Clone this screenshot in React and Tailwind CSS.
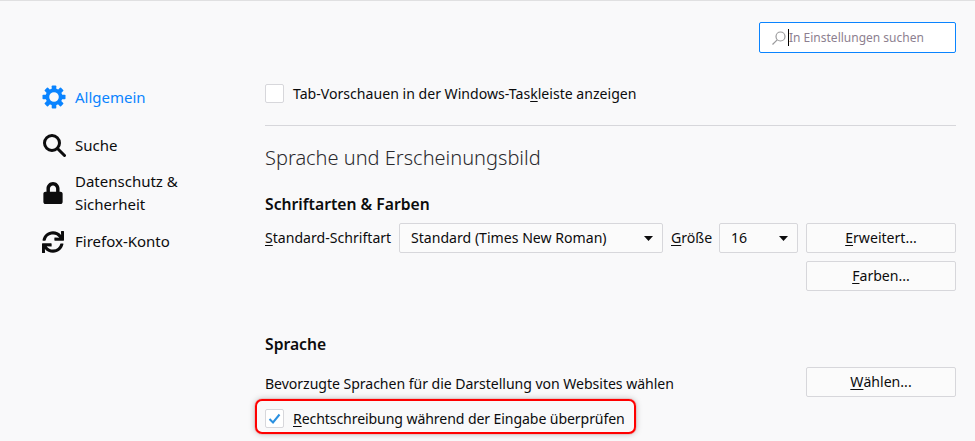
import React from 'react';
import { FaLock, FaSync } from 'react-icons/fa';

const U = ({ children }) => <span className="underline underline-offset-2 decoration-1">{children}</span>;

const NavItem = ({ icon, active, children, className = '' }) => (
  <div className={`flex items-center ${className}`}>
    <div className="w-[33px] flex justify-start shrink-0">{icon}</div>
    <div className={`text-[15px] leading-[23px] ${active ? 'text-[#0a84ff]' : 'text-[#0c0c0d]'}`}>{children}</div>
  </div>
);

const Select = ({ className, value }) => (
  <div className={`h-[30px] flex items-center justify-between rounded-[2px] border border-[#d7d7db] bg-[#fbfbfb] pl-[11px] pr-[9px] ${className}`}>
    <span>{value}</span>
    <svg width="9" height="5" viewBox="0 0 9 5"><path d="M0 0h9L4.5 5z" fill="#0c0c0d" /></svg>
  </div>
);

const Button = ({ children }) => (
  <div className="w-[150px] h-[30px] flex items-center justify-center rounded-[2px] border border-[#d7d7db] bg-[#fbfbfb]">{children}</div>
);

const Gear = () => (
  <svg width="24" height="24" viewBox="0 0 24 24" fill="#0a84ff">
    {[0, 45, 90, 135, 180, 225, 270, 315].map((a) => (
      <rect key={a} x="9.7" y="0.5" width="4.6" height="6" rx="0.8" transform={`rotate(${a} 12 12)`} />
    ))}
    <circle cx="12" cy="12" r="6.6" fill="none" stroke="#0a84ff" strokeWidth="3.6" />
  </svg>
);

export default function App() {
  return (
    <div className="w-[975px] h-[441px] overflow-hidden bg-[#f9f9fa] border-t border-[#e0e0e1] text-[14.1px] text-[#0c0c0d] font-['Noto_Sans',sans-serif]">
      {/* Suche */}
      <div className="flex justify-end pt-[21px] pr-[19px]">
        <div className="w-[197px] h-[31px] flex items-center rounded-[2px] border border-[#0a84ff] bg-white pl-[11px]">
          <svg width="16" height="16" viewBox="0 0 16 16" fill="none" stroke="#9a9a9c" strokeWidth="1.2">
            <circle cx="9.5" cy="6.5" r="4.5" />
            <path d="M6.2 9.8 1.5 14.5" />
          </svg>
          <div className="ml-[1px] w-[1px] h-[17px] bg-black" />
          <span className="text-[12px] text-[#8d7f90] whitespace-nowrap">In Einstellungen suchen</span>
        </div>
      </div>

      <div className="flex">
        {/* Seitenleiste */}
        <div className="w-[265px] shrink-0 pl-[42px] pt-[32px]">
          <NavItem active icon={<Gear />}>Allgemein</NavItem>
          <NavItem className="mt-[24px]" icon={<svg width="24" height="24" viewBox="0 0 24 24" fill="none" stroke="#0c0c0d" strokeWidth="3"><circle cx="10" cy="10" r="7.5" /><path d="M15.5 15.5 22.5 22.5" strokeLinecap="round" /></svg>}>Suche</NavItem>
          <NavItem className="mt-[13px]" icon={<FaLock size={22} color="#0c0c0d" />}>Datenschutz &<br />Sicherheit</NavItem>
          <NavItem className="mt-[14px]" icon={<FaSync size={22} color="#0c0c0d" />}>Firefox-Konto</NavItem>
        </div>

        {/* Inhalt */}
        <div className="w-[691px] pt-[31px]">
          <div className="flex items-center h-[19px]">
            <div className="w-[19px] h-[19px] rounded-[2px] border border-[#d7d7db] bg-white" />
            <span className="ml-[9px]">Tab-Vorschauen in der Windows-Tas<U>k</U>leiste anzeigen</span>
          </div>
          <div className="mt-[22px] h-[1px] bg-[#d7d7db]" />
          <h1 className="mt-[17px] h-[30px] leading-[30px] text-[20px] font-light text-[#2a2a2e]">Sprache und Erscheinungsbild</h1>
          <h2 className="mt-[20px] h-[22px] leading-[22px] text-[15.7px] font-semibold">Schriftarten & Farben</h2>
          <div className="mt-[8px] flex items-center">
            <span className="w-[134px] whitespace-nowrap"><U>S</U>tandard-Schriftart</span>
            <Select className="w-[264px]" value="Standard (Times New Roman)" />
            <span className="ml-[8px] w-[48px]"><U>G</U>röße</span>
            <Select className="w-[79px]" value="16" />
            <div className="ml-[8px]"><Button><U>E</U>rweitert...</Button></div>
          </div>
          <div className="mt-[8px] flex justify-end"><Button><U>F</U>arben...</Button></div>
          <h2 className="mt-[42px] h-[22px] leading-[22px] text-[15.7px] font-semibold">Sprache</h2>
          <div className="mt-[12px] flex items-center justify-between">
            <span className="pt-[3px] tracking-[-0.05px]">Bevorzugte Sprachen für die Darstellung von Websites wählen</span>
            <Button><U>W</U>ählen...</Button>
          </div>
          <div className="mt-[2px] ml-[-10px] w-[381px] h-[35px] rounded-[7px] border-2 border-[#f00] pl-[8px] pt-[7px] shadow-[0_0_1px_#f00,0_0_6px_rgba(0,0,0,0.25)]">
            <div className="flex items-center">
              <div className="w-[19px] h-[19px] rounded-[2px] border border-[#d7d7db] bg-white flex items-center justify-center">
                <svg width="13" height="11" viewBox="0 0 13 11" fill="none" stroke="#2a90e0" strokeWidth="2"><path d="M1.5 6 5 9.5 11.5 1.5" /></svg>
              </div>
              <span className="ml-[9px] whitespace-nowrap tracking-[-0.1px]"><U>R</U>echtschreibung während der Eingabe überprüfen</span>
            </div>
          </div>
        </div>
      </div>
    </div>
  );
}
